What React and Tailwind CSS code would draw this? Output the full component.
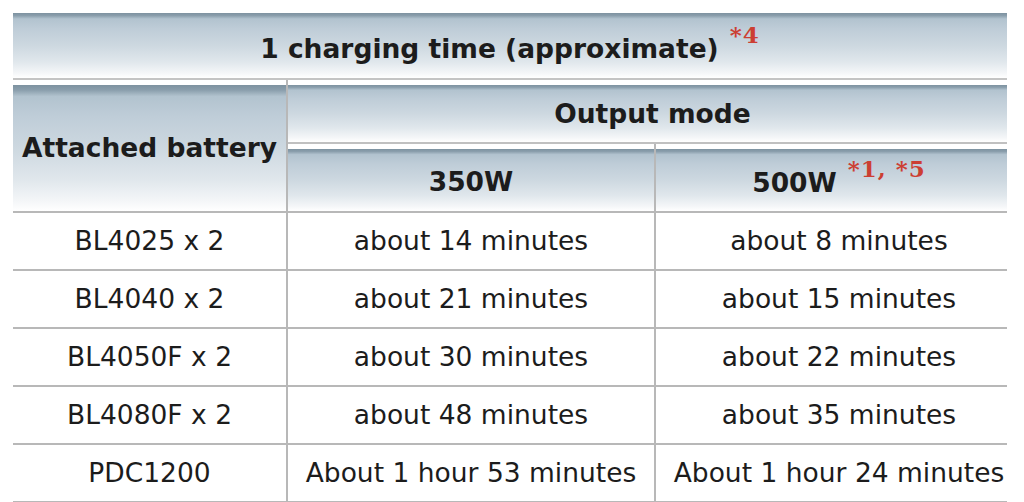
import React from "react";

const grad =
  "bg-[linear-gradient(to_bottom,#7d92a0_0%,#8a9eac_4%,#b2c3cf_9%,#bfcdd8_25%,#cdd8e0_50%,#e0e7ec_75%,#f4f6f8_92%,#ffffff_100%)]";

function Sup({ children }) {
  return (
    <span className="relative -top-[14px] ml-[11px] font-['DejaVu_Serif',serif] text-[23px] font-bold text-[#cc3f33] tracking-[1px]">
      {children}
    </span>
  );
}

const rows = [
  ["BL4025 x 2", "about 14 minutes", "about 8 minutes"],
  ["BL4040 x 2", "about 21 minutes", "about 15 minutes"],
  ["BL4050F x 2", "about 30 minutes", "about 22 minutes"],
  ["BL4080F x 2", "about 48 minutes", "about 35 minutes"],
  ["PDC1200", "About 1 hour 53 minutes", "About 1 hour 24 minutes"],
];

export default function App() {
  return (
    <div className="w-[1024px] h-[502px] overflow-hidden bg-white pl-[13px] pt-[13px] font-['DejaVu_Sans',Verdana,sans-serif] text-[#1c1c1c]">
      <div className="w-[994px]">
        <div className={`h-[67px] border-b-2 border-[#c4c4c4] ${grad} flex items-center justify-center pt-[7px] text-[26.5px] font-bold whitespace-nowrap`}>
          <span>1 charging time (approximate)</span>
          <Sup>*4</Sup>
        </div>
        <div className="grid grid-cols-[275px_368px_351px]">
          <div className="row-span-2 border-r-2 border-b-2 border-[#b8b8b8] pt-[5px]">
            <div className={`h-full ${grad} flex items-center justify-center text-[26.5px] font-bold whitespace-nowrap`}>
              Attached battery
            </div>
          </div>
          <div className="col-span-2 h-[64px] border-b-2 border-[#c0c0c0] pt-[5px]">
            <div className={`h-full ${grad} flex items-center justify-center pl-[10px] text-[26.5px] font-bold`}>
              Output mode
            </div>
          </div>
          <div className="h-[69px] border-r-2 border-b-2 border-[#b8b8b8] pt-[5px]">
            <div className={`h-full ${grad} flex items-center justify-center pt-[4px] text-[26.5px] font-bold`}>
              350W
            </div>
          </div>
          <div className="h-[69px] border-b-2 border-[#b8b8b8] pt-[5px]">
            <div className={`h-full ${grad} flex items-center justify-center pl-[15px] pt-[6px] text-[26.5px] font-bold whitespace-nowrap`}>
              <span>500W</span>
              <Sup>*1, *5</Sup>
            </div>
          </div>
          {rows.map((r, i) => (
            <React.Fragment key={i}>
              <div className="h-[58px] border-r-2 border-b-2 border-[#b8b8b8] flex items-center justify-center text-[26.5px] whitespace-nowrap">
                {r[0]}
              </div>
              <div className="h-[58px] border-r-2 border-b-2 border-[#b8b8b8] flex items-center justify-center text-[26.5px] whitespace-nowrap">
                {r[1]}
              </div>
              <div className="h-[58px] border-b-2 border-[#b8b8b8] flex items-center justify-center pl-[15px] text-[26.5px] whitespace-nowrap">
                {r[2]}
              </div>
            </React.Fragment>
          ))}
        </div>
      </div>
    </div>
  );
}
